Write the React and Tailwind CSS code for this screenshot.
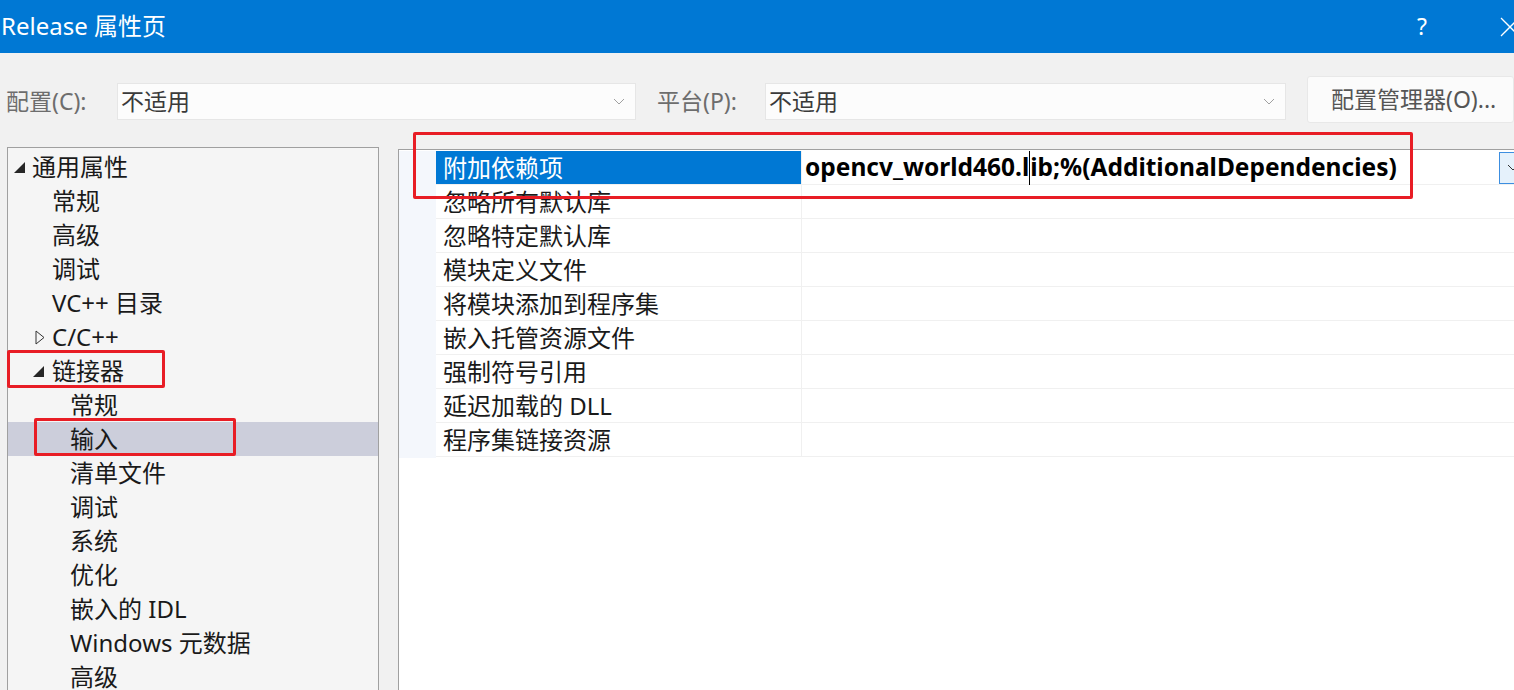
import React from "react";

const FONT = { fontFamily: '"Noto Sans", "Noto Sans CJK SC", sans-serif' };

const tree = [
  { t: "通用属性", lvl: 0, exp: "open" },
  { t: "常规", lvl: 1 },
  { t: "高级", lvl: 1 },
  { t: "调试", lvl: 1 },
  { t: "VC++ 目录", lvl: 1 },
  { t: "C/C++", lvl: 1, exp: "closed" },
  { t: "链接器", lvl: 1, exp: "open" },
  { t: "常规", lvl: 2 },
  { t: "输入", lvl: 2, sel: true },
  { t: "清单文件", lvl: 2 },
  { t: "调试", lvl: 2 },
  { t: "系统", lvl: 2 },
  { t: "优化", lvl: 2 },
  { t: "嵌入的 IDL", lvl: 2 },
  { t: "Windows 元数据", lvl: 2 },
  { t: "高级", lvl: 2 },
];

const props = [
  "附加依赖项",
  "忽略所有默认库",
  "忽略特定默认库",
  "模块定义文件",
  "将模块添加到程序集",
  "嵌入托管资源文件",
  "强制符号引用",
  "延迟加载的 DLL",
  "程序集链接资源",
];

const levelPad = ["pl-[6px]", "pl-[25px]", "pl-[62px]"];
const slotW = ["w-[18px]", "w-[19px]", "w-0"];

function Expander({ kind }) {
  if (kind === "open") {
    return (
      <svg width="11" height="11" viewBox="0 0 11 11">
        <polygon points="11,0 11,11 0,11" fill="#262626" />
      </svg>
    );
  }
  return (
    <svg width="10" height="15" viewBox="0 0 10 15" className="ml-[2px]">
      <polygon points="1,1 9,7.5 1,14" fill="none" stroke="#333" strokeWidth="1" />
    </svg>
  );
}

function Chevron({ color = "#a0a0a0" }) {
  return (
    <svg width="12" height="8" viewBox="0 0 12 8">
      <polyline points="1,1 6,6 11,1" fill="none" stroke={color} strokeWidth="1" />
    </svg>
  );
}

function Combo({ w }) {
  return (
    <div
      className={`${w} h-[37px] bg-[#fcfcfc] border border-[#e6e6e6] flex items-center justify-between pl-[3px] pr-[10px]`}
    >
      <span className="text-[23px] text-[#3a3a3a] leading-none">不适用</span>
      <Chevron />
    </div>
  );
}

export default function App() {
  return (
    <div className="relative w-full h-[690px] overflow-hidden bg-[#f1f1f1]" style={FONT}>
      {/* title bar */}
      <div className="h-[53px] bg-[#0078d4] flex items-center justify-between">
        <span className="text-white text-[24px] leading-none pl-[1px] pb-[2px]">Release 属性页</span>
        <div className="flex items-center">
          <span className="text-white text-[23px] leading-none mr-[73px]">?</span>
          <svg width="20" height="20" viewBox="0 0 20 20" className="mr-[-6px]">
            <line x1="1" y1="1" x2="19" y2="19" stroke="white" strokeWidth="1.3" />
            <line x1="19" y1="1" x2="1" y2="19" stroke="white" strokeWidth="1.3" />
          </svg>
        </div>
      </div>

      {/* toolbar */}
      <div className="h-[94px] flex items-start pt-[23px]">
        <div className="flex items-center mt-[7px]">
          <span className="w-[117px] pl-[6px] text-[23px] text-[#6d6d6d] leading-none">配置(C):</span>
          <Combo w="w-[519px]" />
          <span className="w-[129px] pl-[21px] text-[23px] text-[#6d6d6d] leading-none">平台(P):</span>
          <Combo w="w-[521px]" />
        </div>
        <div className="ml-[21px] h-[47px] flex-1 bg-[#fbfbfb] border border-[#e8e8e8] rounded-[3px] flex items-center pl-[23px] whitespace-nowrap">
          <span className="text-[23px] text-[#555] leading-none">配置管理器(O)...</span>
        </div>
      </div>

      {/* main */}
      <div className="flex items-start">
        {/* tree */}
        <div className="ml-[7px] w-[372px] h-[560px] bg-[#f5f5f5] border border-[#a0a0a0] pt-[2px]">
          {tree.map((n, i) => (
            <div
              key={i}
              className={`h-[34px] flex items-center ${levelPad[n.lvl]} ${n.sel ? "bg-[#cccedb]" : ""}`}
            >
              <div className={`${slotW[n.lvl]} shrink-0 flex items-center`}>
                {n.exp ? <Expander kind={n.exp} /> : null}
              </div>
              <span className="text-[24px] text-[#1a1a1a] leading-none whitespace-nowrap">{n.t}</span>
            </div>
          ))}
        </div>

        {/* property grid */}
        <div className="ml-[19px] mt-[2px] flex-1 h-[560px] bg-white border-l border-t border-[#a0a0a0] overflow-hidden">
          <div className="flex w-[1130px] pt-[1px]">
            <div className="w-[37px] shrink-0 bg-[#f4f7fc] h-[307px]" />
            <div className="flex-1">
              {props.map((p, i) => (
                <div key={i} className="h-[34px] flex border-b border-[#f0f0f0]">
                  <div
                    className={`w-[365px] shrink-0 flex items-center pl-[7px] ${
                      i === 0 ? "bg-[#0078d4] text-white" : "text-[#1a1a1a]"
                    }`}
                  >
                    <span className="text-[24px] leading-none whitespace-nowrap">{p}</span>
                  </div>
                  <div className="w-px bg-[#f0f0f0]" />
                  <div className="flex-1 flex items-center">
                    {i === 0 ? (
                      <>
                        <div className="flex-1 flex items-center pl-[3px] h-full">
                          <span className="text-[24.5px] font-bold text-black leading-none whitespace-nowrap flex items-center">
                            opencv_world460.l
                            <span className="inline-block w-px h-[34px] bg-black" />
                            ib;%(AdditionalDependencies)
                          </span>
                        </div>
                        <div className="w-[30px] h-[32px] shrink-0 bg-[#e5f1fb] border border-[#3c8ee0] flex items-start pt-[11px] pl-[7px]">
                          <Chevron color="#333" />
                        </div>
                      </>
                    ) : null}
                  </div>
                </div>
              ))}
            </div>
          </div>
        </div>
      </div>

      {/* red annotation boxes */}
      <div className="absolute left-[7px] top-[350px] w-[158px] h-[38px] border-[3px] border-[#e81d25] rounded-[2px]" />
      <div className="absolute left-[34px] top-[418px] w-[202px] h-[38px] border-[3px] border-[#e81d25] rounded-[2px]" />
      <div className="absolute left-[413px] top-[132px] w-[1000px] h-[67px] border-[3px] border-[#e81d25] rounded-[2px]" />
    </div>
  );
}
